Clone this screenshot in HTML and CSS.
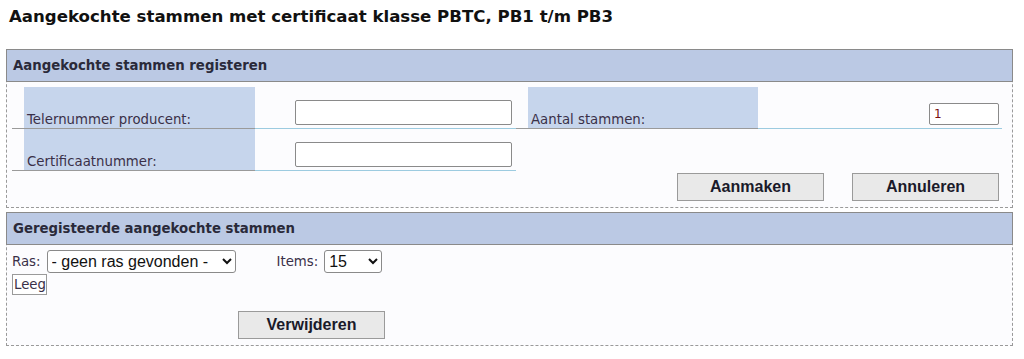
FILE: index.html
```html
<!DOCTYPE html>
<html lang="nl">
<head>
<meta charset="utf-8">
<title>Aangekochte stammen</title>
<link rel="stylesheet" href="styles.css">
</head>
<body>
<h1 class="title">Aangekochte stammen met certificaat klasse PBTC, PB1 t/m PB3</h1>

<div class="panel panel-register">
  <div class="panel-head">Aangekochte stammen registeren</div>
  <div class="panel-body">
    <div class="grid">
      <div class="col">
        <div class="row">
          <div class="lab-wrap"><div class="lab">Telernummer producent:</div></div>
          <div class="inp-wrap"><input class="txt" type="text"></div>
        </div>
        <div class="row">
          <div class="lab-wrap"><div class="lab">Certificaatnummer:</div></div>
          <div class="inp-wrap"><input class="txt" type="text"></div>
        </div>
      </div>
      <div class="col col-right">
        <div class="row">
          <div class="lab-wrap"><div class="lab">Aantal stammen:</div></div>
          <div class="inp-wrap inp-wrap-right"><input class="txt txt-small" type="text" value="1"></div>
        </div>
      </div>
    </div>
    <div class="actions">
      <button class="btn">Aanmaken</button>
      <button class="btn">Annuleren</button>
    </div>
  </div>
</div>

<div class="panel panel-list">
  <div class="panel-head">Geregisteerde aangekochte stammen</div>
  <div class="panel-body list-body">
    <div class="filters">
      <label class="flabel">Ras:</label>
      <select class="sel sel-ras"><option>- geen ras gevonden -</option></select>
      <label class="flabel flabel-items">Items:</label>
      <select class="sel sel-items"><option>15</option></select>
    </div>
    <div class="empty">Leeg</div>
    <div class="list-actions">
      <button class="btn">Verwijderen</button>
    </div>
  </div>
</div>
</body>
</html>
```

FILE: styles.css
```css
html, body {
  margin: 0;
  padding: 0;
  background: #ffffff;
}
body {
  padding: 7px 11px 0 6px;
  font-family: "DejaVu Sans", Verdana, sans-serif;
  color: #222;
}
.title {
  margin: 0 0 0 3px;
  font-size: 16.6px;
  line-height: 19px;
  font-weight: bold;
  color: #111;
}
.panel {
  border: 1px dashed #9a9a9a;
  background: #fcfcfe;
}
.panel-register {
  margin-top: 23px;
}
.panel-list {
  margin-top: 4px;
}
.panel-head {
  margin: -1px -1px 0 -1px;
  background: #bbc9e4;
  border: 1px solid #8a8a8a;
  font-weight: bold;
  font-size: 13.3px;
  color: #2a2a3a;
  padding: 0 6px;
  height: 31px;
  line-height: 31px;
}
.panel-body {
  padding: 5px 10px 6px 5px;
}
.grid {
  display: flex;
}
.col {
  width: 504px;
}
.col-right {
  width: 486px;
}
.row {
  display: flex;
}
.lab-wrap {
  width: 243px;
  padding-left: 12px;
  box-sizing: border-box;
  border-bottom: 1px solid #9a9a9a;
}
.col-right .lab-wrap {
  width: 242px;
  padding-left: 12px;
}
.lab {
  background: #c6d5ec;
  height: 41px;
  font-size: 13.3px;
  color: #3a3048;
  padding-left: 3px;
  display: flex;
  align-items: flex-end;
  padding-bottom: 1px;
  box-sizing: border-box;
}
.inp-wrap {
  flex: 1;
  border-bottom: 1px solid #9ccbe0;
  display: flex;
  align-items: flex-end;
  padding: 0 4px 3px 40px;
}
.inp-wrap-right {
  justify-content: flex-end;
  padding-right: 3px;
}
.txt {
  width: 217px;
  height: 25px;
  box-sizing: border-box;
  border: 1px solid #8a8a8a;
  border-radius: 2px;
  background: #fff;
  font-family: "DejaVu Sans", Verdana, sans-serif;
  font-size: 12px;
  color: #7a1010;
  padding: 0 4px;
  margin: 0;
}
.txt-small {
  width: 70px;
  height: 22px;
}
.actions {
  display: flex;
  justify-content: flex-end;
  gap: 28px;
  padding: 2px 3px 0 0;
}
.btn {
  width: 147px;
  height: 28px;
  border: 1px solid #9a9a9a;
  background: #e9e9e9;
  font-family: "Liberation Sans", Arial, sans-serif;
  font-weight: bold;
  font-size: 16px;
  color: #1a1a2a;
  margin: 0;
  padding: 0;
}
.list-body {
  padding: 5px 6px 6px 5px;
}
.filters {
  display: flex;
  align-items: center;
  height: 23px;
}
.flabel {
  font-size: 13.3px;
  color: #3a3048;
  margin-right: 6px;
}
.flabel-items {
  margin-left: 41px;
  margin-right: 6px;
}
.sel {
  height: 23px;
  font-family: "Liberation Sans", Arial, sans-serif;
  font-size: 16px;
  color: #111;
  border: 1px solid #8a8a8a;
  border-radius: 3px;
  background: #fff;
  margin: 0;
}
.sel-ras {
  width: 189px;
}
.sel-items {
  width: 58px;
}
.empty {
  display: inline-block;
  margin-top: 1px;
  border: 1px solid #9a9a9a;
  background: #fff;
  font-size: 13.3px;
  color: #3a3048;
  padding: 2px 0 2px 1px;
}
.list-actions {
  padding: 16px 0 0 226px;
}
```
